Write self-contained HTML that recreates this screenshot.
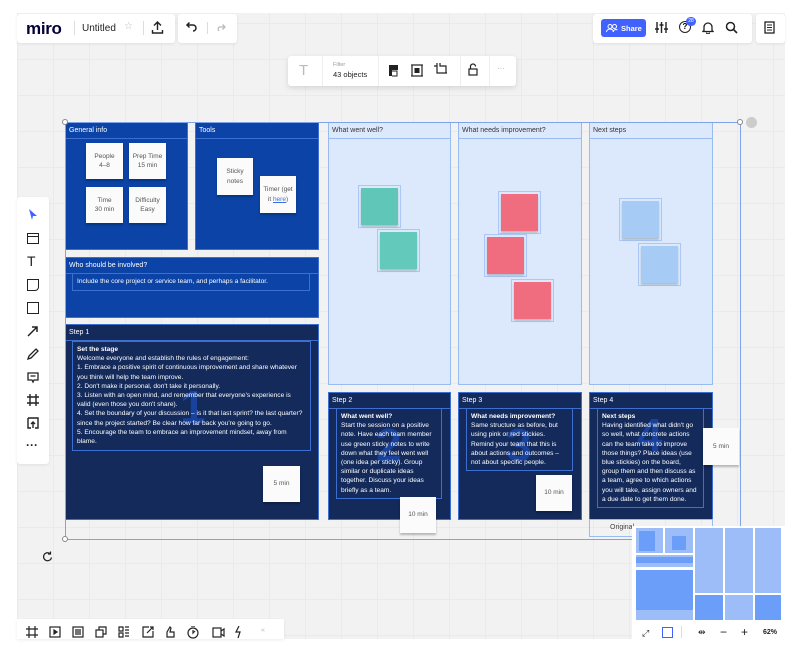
<!DOCTYPE html><html><head><style>
*{margin:0;padding:0;box-sizing:border-box}
body{width:797px;height:666px;background:#fff;position:relative;overflow:hidden;font-family:"Liberation Sans",sans-serif}
.a{position:absolute}
#cv{left:17px;top:13px;width:768px;height:626px;background-color:#f2f2f2;background-image:linear-gradient(#eaeaea 1px,transparent 1px),linear-gradient(90deg,#eaeaea 1px,transparent 1px);background-size:36px 36px;background-position:0 10px}
.pnl{background:#fff;border-radius:3px;box-shadow:0 1px 3px rgba(0,0,0,.08)}
.fr{background:#0b43a6;border:1px solid #3c6fd0}
.fr .h{position:absolute;left:0;right:0;top:0;height:16px;border-bottom:1px solid #3c6fd0;color:#fff;font-size:7px;padding:4px 3px}
.nv{background:#132a5b;border:1px solid #3c6fd0}
.nv .h{position:absolute;left:0;right:0;top:0;height:16px;border-bottom:1px solid #3c6fd0;color:#fff;font-size:7px;padding:4px 3px}
.lt{background:#dce9fd;border:1px solid #98bbf2}
.lt .h{position:absolute;left:0;right:0;top:0;height:16px;border-bottom:1px solid #98bbf2;color:#333;font-size:7px;padding:4px 3px}
.st{background:#fbfbfb;box-shadow:0 2px 2px rgba(0,0,0,.25);font-size:6.5px;color:#555;text-align:center;display:flex;align-items:center;justify-content:center;line-height:1.45}
.c{box-shadow:0 2px 2px rgba(0,0,0,.2);outline:1px solid rgba(140,175,240,.6);outline-offset:2px}
.tx{border:1px solid #3c6fd0;color:#fff;font-size:6.6px;line-height:9.2px;padding:3px 4px}
.num{position:absolute;font-size:46px;font-weight:bold;color:#1b49ad;opacity:.8}
</style></head><body>
<div id="cv" class="a"></div>
<!-- top bars -->
<div class="a pnl" style="left:17px;top:14px;width:158px;height:29px"></div>
<div class="a" style="left:26px;top:19px;font-size:17px;font-weight:bold;color:#050038;letter-spacing:-.3px">miro</div>
<div class="a" style="left:74px;top:21px;width:1px;height:14px;background:#ddd"></div>
<div class="a" style="left:82px;top:23px;font-size:10px;color:#222">Untitled</div>
<div class="a" style="left:124px;top:21px;font-size:10px;color:#bbb">☆</div>
<div class="a" style="left:143px;top:21px;width:1px;height:14px;background:#ddd"></div>
<svg class="a" style="left:151px;top:21px" width="13" height="13"><path d="M6.5 9V1M3 4.5L6.5 1 10 4.5M1.5 9v3h10V9" stroke="#222" stroke-width="1.4" fill="none"/></svg>
<div class="a pnl" style="left:178px;top:14px;width:59px;height:29px"></div>
<svg class="a" style="left:185px;top:22px" width="12" height="10"><path d="M2 3h6a3 3 0 0 1 0 6M4.5 0.5L2 3l2.5 2.5" stroke="#222" stroke-width="1.5" fill="none"/></svg>
<div class="a" style="left:207px;top:22px;width:1px;height:12px;background:#ddd"></div>
<svg class="a" style="left:215px;top:22px" width="12" height="10"><path d="M10 5H4a3 3 0 0 0 0 4M7.5 2.5L10 5 7.5 7.5" stroke="#bbb" stroke-width="1.3" fill="none"/></svg>
<div class="a pnl" style="left:593px;top:14px;width:159px;height:29px"></div>
<div class="a" style="left:601px;top:19px;width:45px;height:18px;background:#4262ff;border-radius:3px;color:#fff;font-size:7.5px;font-weight:bold;padding:5px 0 0 20px">Share</div>
<svg class="a" style="left:606px;top:24px" width="12" height="8"><circle cx="4" cy="2.5" r="2" stroke="#fff" fill="none"/><circle cx="8.5" cy="2.5" r="2" stroke="#fff" fill="none"/><path d="M0.5 8a3.5 3 0 0 1 7 0M7 8a3 3 0 0 1 4.5-2" stroke="#fff" fill="none"/></svg>
<svg class="a" style="left:655px;top:21px" width="13" height="13"><path d="M2 1v11M6.5 1v11M11 1v11" stroke="#222" stroke-width="1.4"/><path d="M0 8h4M4.5 4h4M9 8h4" stroke="#222" stroke-width="1.6"/></svg>
<div class="a" style="left:679px;top:21px;width:12px;height:12px;border:1.4px solid #222;border-radius:50%;font-size:8px;font-weight:bold;text-align:center;line-height:10px">?</div>
<div class="a" style="left:686px;top:17px;width:10px;height:9px;background:#4262ff;border-radius:5px;color:#fff;font-size:5px;text-align:center;line-height:9px">28</div>
<svg class="a" style="left:702px;top:21px" width="12" height="13"><path d="M2 9.5V6a4 4 0 0 1 8 0v3.5l1 1H1z M4.5 11.5a1.5 1.5 0 0 0 3 0" stroke="#222" stroke-width="1.3" fill="none"/></svg>
<svg class="a" style="left:725px;top:21px" width="13" height="13"><circle cx="5.5" cy="5.5" r="4" stroke="#222" stroke-width="1.5" fill="none"/><path d="M8.5 8.5l3.5 3.5" stroke="#222" stroke-width="1.6"/></svg>
<div class="a pnl" style="left:756px;top:14px;width:29px;height:29px"></div>
<svg class="a" style="left:764px;top:21px" width="11" height="13"><rect x="1" y="1" width="9" height="11" stroke="#222" stroke-width="1.3" fill="none"/><path d="M3 4h5M3 6.5h5M3 9h5" stroke="#222"/></svg>
<!-- filter toolbar -->
<div class="a pnl" style="left:288px;top:56px;width:228px;height:30px;box-shadow:0 2px 6px rgba(0,0,0,.12)"></div>
<div class="a" style="left:299px;top:62px;font-size:15px;color:#bbb">T</div>
<div class="a" style="left:322px;top:56px;width:1px;height:30px;background:#eee"></div>
<div class="a" style="left:333px;top:62px;font-size:5.5px;color:#999">Filter</div>
<div class="a" style="left:333px;top:70px;font-size:7.5px;color:#222">43 objects</div>
<div class="a" style="left:378px;top:56px;width:1px;height:30px;background:#eee"></div>
<svg class="a" style="left:388px;top:64px" width="12" height="13"><path d="M1 1h9v5H4v6H1z" fill="#222"/><path d="M4 7h5v5H4" stroke="#222" fill="none"/></svg>
<svg class="a" style="left:411px;top:64px" width="12" height="13"><rect x="1" y="1" width="10" height="11" stroke="#222" stroke-width="1.2" fill="none"/><rect x="3.5" y="4" width="5" height="5" fill="#222"/><path d="M0 1h12M0 12h12" stroke="#222"/></svg>
<svg class="a" style="left:434px;top:63px" width="13" height="14"><path d="M3 0v10h10M0 3h3M6 0v3h6v7" stroke="#222" stroke-width="1.2" fill="none"/></svg>
<div class="a" style="left:460px;top:56px;width:1px;height:30px;background:#eee"></div>
<svg class="a" style="left:468px;top:63px" width="10" height="13"><path d="M2.5 6V3.5a2.5 2.5 0 0 1 5 0" stroke="#222" stroke-width="1.2" fill="none"/><rect x="1" y="6" width="8" height="6" stroke="#222" stroke-width="1.2" fill="none"/></svg>
<div class="a" style="left:489px;top:56px;width:1px;height:30px;background:#eee"></div>
<div class="a" style="left:497px;top:64px;font-size:8px;color:#aaa">···</div>
<!-- frames -->
<div class="a fr" style="left:65px;top:122px;width:123px;height:128px"><div class="h">General info</div></div>
<div class="a fr" style="left:195px;top:122px;width:124px;height:128px"><div class="h">Tools</div></div>
<div class="a fr" style="left:65px;top:257px;width:254px;height:61px"><div class="h">Who should be involved?</div></div>
<div class="a tx" style="left:72px;top:273px;width:238px;height:18px">Include the core project or service team, and perhaps a facilitator.</div>
<div class="a nv" style="left:65px;top:324px;width:254px;height:196px"><div class="h">Step 1</div></div>
<div class="num" style="left:180px;top:380px">1</div>
<div class="a tx" style="left:72px;top:341px;width:239px;height:110px"><b>Set the stage</b><br>Welcome everyone and establish the rules of engagement:<br>1. Embrace a positive spirit of continuous improvement and share whatever you think will help the team improve.<br>2. Don't make it personal, don't take it personally.<br>3. Listen with an open mind, and remember that everyone's experience is valid (even those you don't share).<br>4. Set the boundary of your discussion – is it that last sprint? the last quarter? since the project started? Be clear how far back you're going to go.<br>5. Encourage the team to embrace an improvement mindset, away from blame.</div>
<div class="a lt" style="left:328px;top:122px;width:123px;height:263px"><div class="h">What went well?</div></div>
<div class="a lt" style="left:458px;top:122px;width:124px;height:263px"><div class="h">What needs improvement?</div></div>
<div class="a lt" style="left:589px;top:122px;width:124px;height:263px"><div class="h">Next steps</div></div>
<div class="a nv" style="left:328px;top:392px;width:123px;height:128px"><div class="h">Step 2</div></div>
<div class="a nv" style="left:458px;top:392px;width:124px;height:128px"><div class="h">Step 3</div></div>
<div class="a nv" style="left:589px;top:392px;width:124px;height:128px"><div class="h">Step 4</div></div>
<div class="num" style="left:376px;top:418px">2</div>
<div class="num" style="left:506px;top:418px">3</div>
<div class="num" style="left:637px;top:408px">4</div>
<div class="a tx" style="left:336px;top:408px;width:106px;height:91px"><b>What went well?</b><br>Start the session on a positive note. Have each team member use green sticky notes to write down what they feel went well (one idea per sticky). Group similar or duplicate ideas together. Discuss your ideas briefly as a team.</div>
<div class="a tx" style="left:466px;top:408px;width:107px;height:63px"><b>What needs improvement?</b><br>Same structure as before, but using pink or red stickies. Remind your team that this is about actions and outcomes – not about specific people.</div>
<div class="a tx" style="left:597px;top:408px;width:107px;height:100px"><b>Next steps</b><br>Having identified what didn't go so well, what concrete actions can the team take to improve those things? Place ideas (use blue stickies) on the board, group them and then discuss as a team, agree to which actions you will take, assign owners and a due date to get them done.</div>
<!-- selection -->
<div class="a" style="left:65px;top:122px;width:676px;height:418px;border:1px solid #7fa3ea"></div>
<div class="a" style="left:62px;top:119px;width:6px;height:6px;border:1px solid #888;border-radius:50%;background:#fff"></div>
<div class="a" style="left:737px;top:119px;width:6px;height:6px;border:1px solid #888;border-radius:50%;background:#fff"></div>
<div class="a" style="left:62px;top:536px;width:6px;height:6px;border:1px solid #888;border-radius:50%;background:#fff"></div>
<div class="a" style="left:746px;top:117px;width:11px;height:11px;border-radius:50%;background:#ccc"></div>
<div class="a" style="left:589px;top:519px;width:124px;height:18px;border:1px solid #98bbf2;font-size:7px;color:#444;padding:4px 0 0 20px">Original</div>
<!-- stickies -->
<div class="a st" style="left:86px;top:143px;width:37px;height:36px"><span>People<br>4–8</span></div>
<div class="a st" style="left:129px;top:143px;width:37px;height:36px"><span>Prep Time<br>15 min</span></div>
<div class="a st" style="left:86px;top:187px;width:37px;height:36px"><span>Time<br>30 min</span></div>
<div class="a st" style="left:129px;top:187px;width:37px;height:36px"><span>Difficulty<br>Easy</span></div>
<div class="a st" style="left:217px;top:158px;width:36px;height:37px"><span>Sticky<br>notes</span></div>
<div class="a st" style="left:260px;top:176px;width:36px;height:37px"><span>Timer (get<br>it <u style="color:#3870e0">here</u>)</span></div>
<div class="a st" style="left:263px;top:466px;width:37px;height:36px"><span>5 min</span></div>
<div class="a st" style="left:400px;top:497px;width:36px;height:36px"><span>10 min</span></div>
<div class="a st" style="left:536px;top:475px;width:36px;height:36px"><span>10 min</span></div>
<div class="a st" style="left:703px;top:428px;width:36px;height:37px"><span>5 min</span></div>
<div class="a c" style="left:361px;top:188px;width:37px;height:37px;background:#5fc6b8"></div>
<div class="a c" style="left:380px;top:232px;width:37px;height:37px;background:#63c9bb"></div>
<div class="a c" style="left:501px;top:194px;width:37px;height:37px;background:#ef6d7e"></div>
<div class="a c" style="left:487px;top:237px;width:37px;height:37px;background:#ef6d7e"></div>
<div class="a c" style="left:514px;top:282px;width:37px;height:37px;background:#ef6d7e"></div>
<div class="a c" style="left:622px;top:201px;width:37px;height:37px;background:#a6cbf4"></div>
<div class="a c" style="left:641px;top:246px;width:37px;height:37px;background:#a6cbf4"></div>
<!-- left toolbar -->
<div class="a pnl" style="left:17px;top:197px;width:32px;height:267px"></div>
<svg class="a" style="left:28px;top:208px" width="10" height="13"><path d="M1 1l8 7H5l-1 4z" fill="#4262ff"/></svg>
<div class="a" style="left:27px;top:233px;width:12px;height:11px;border:1.5px solid #222"><div style="height:3px;border-bottom:1.5px solid #222"></div></div>
<div class="a" style="left:27px;top:253px;font-size:14px;color:#222">T</div>
<div class="a" style="left:27px;top:279px;width:12px;height:12px;border:1.5px solid #222;border-radius:0 0 4px 0"></div>
<div class="a" style="left:27px;top:302px;width:12px;height:12px;border:1.5px solid #222"></div>
<svg class="a" style="left:27px;top:325px" width="12" height="12"><path d="M1 11L10 2M5 2h5v5" stroke="#222" stroke-width="1.5" fill="none"/></svg>
<svg class="a" style="left:27px;top:348px" width="12" height="12"><path d="M1 11l1-3 7-7 2 2-7 7z" stroke="#222" stroke-width="1.3" fill="none"/></svg>
<svg class="a" style="left:27px;top:372px" width="12" height="12"><path d="M1 1h10v7H7l-1 2-1-2H1z M3.5 4h5" stroke="#222" stroke-width="1.3" fill="none"/></svg>
<svg class="a" style="left:27px;top:394px" width="12" height="12"><path d="M3 0v12M9 0v12M0 3h12M0 9h12" stroke="#222" stroke-width="1.4"/></svg>
<svg class="a" style="left:27px;top:417px" width="12" height="12"><path d="M1 1h10v10H8M4 11H1V1M6 11V5M4 7l2-2 2 2" stroke="#222" stroke-width="1.4" fill="none"/></svg>
<div class="a" style="left:26px;top:438px;font-size:12px;font-weight:bold;color:#222">···</div>
<svg class="a" style="left:42px;top:551px" width="11" height="11"><path d="M8.5 3A4 4 0 1 0 9.5 6.5M8.5 0.5V3H6" stroke="#222" stroke-width="1.2" fill="none"/></svg>
<!-- bottom toolbar -->
<div class="a pnl" style="left:17px;top:619px;width:267px;height:20px;border-radius:0"></div>
<svg class="a" style="left:26px;top:626px" width="232" height="13" fill="none" stroke="#222" stroke-width="1.2">
<path d="M3 0v12M9 0v12M0 3h12M0 9h12"/>
<rect x="24" y="1" width="10" height="10"/><path d="M28 4l3 2-3 2z" fill="#222"/>
<rect x="47" y="1" width="10" height="10"/><path d="M49 4h6M49 6h6M49 8h6"/>
<rect x="70" y="4" width="7" height="7"/><path d="M73 4V1h7v7h-3"/>
<path d="M93 1h4v4h-4zM93 7h4v4h-4zM99 1h4M99 4h4M99 7h4M99 10h4"/>
<path d="M123 1h-6v10h10V5M121 7l6-6M124 1h3v3"/>
<path d="M141 11V6l3-5 1 1-1 4h4v5z"/>
<circle cx="167" cy="7" r="5"/><path d="M167 4v3l2-2M165 0h4"/>
<rect x="187" y="2" width="8" height="9"/><path d="M195 5l3-2v7l-3-2"/>
<path d="M213 0l-3 6h4l-2 6"/>
</svg>
<div class="a" style="left:261px;top:627px;font-size:7px;color:#bbb">«</div>
<!-- minimap -->
<div class="a" style="left:632px;top:526px;width:153px;height:113px;background:#fff"></div>
<div class="a" style="left:636px;top:528px;width:145px;height:92px">
<div class="a" style="left:0;top:0;width:27px;height:25px;background:#9cbdf7"></div>
<div class="a" style="left:3px;top:3px;width:16px;height:20px;background:#6a9ef8"></div>
<div class="a" style="left:29px;top:0;width:28px;height:25px;background:#9cbdf7"></div>
<div class="a" style="left:36px;top:8px;width:14px;height:14px;background:#6a9ef8"></div>
<div class="a" style="left:0;top:27px;width:57px;height:12px;background:#9cbdf7"></div>
<div class="a" style="left:0;top:29px;width:57px;height:6px;background:#6a9ef8"></div>
<div class="a" style="left:0;top:42px;width:57px;height:50px;background:#9cbdf7"></div>
<div class="a" style="left:0;top:42px;width:57px;height:40px;background:#6a9ef8"></div>
<div class="a" style="left:59px;top:0;width:28px;height:65px;background:#9cbdf7"></div>
<div class="a" style="left:89px;top:0;width:28px;height:65px;background:#9cbdf7"></div>
<div class="a" style="left:119px;top:0;width:26px;height:65px;background:#9cbdf7"></div>
<div class="a" style="left:59px;top:67px;width:28px;height:25px;background:#6a9ef8"></div>
<div class="a" style="left:89px;top:67px;width:28px;height:25px;background:#9cbdf7"></div>
<div class="a" style="left:119px;top:67px;width:26px;height:25px;background:#6a9ef8"></div>
</div>
<div class="a" style="left:642px;top:628px;font-size:9px;color:#222">⤢</div>
<div class="a" style="left:662px;top:627px;width:11px;height:11px;border:1.3px solid #4262ff"></div>
<div class="a" style="left:681px;top:626px;width:1px;height:12px;background:#ddd"></div>
<div class="a" style="left:698px;top:627px;font-size:9px;color:#222">⇹</div>
<div class="a" style="left:720px;top:625px;font-size:12px;color:#222">−</div>
<div class="a" style="left:741px;top:625px;font-size:12px;color:#222">+</div>
<div class="a" style="left:763px;top:629px;font-size:7px;color:#222;font-weight:bold">62%</div>
</body></html>
